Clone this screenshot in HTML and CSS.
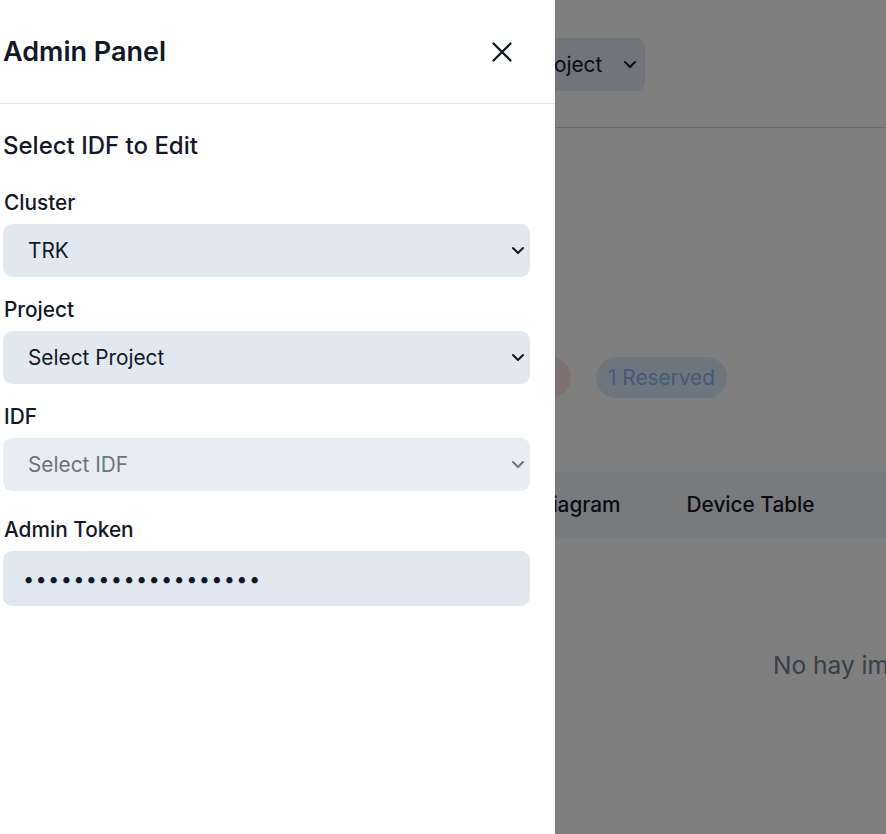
FILE: index.html
```html
<!DOCTYPE html>
<html lang="en">
<head>
<meta charset="utf-8">
<title>Admin Panel</title>
<link rel="stylesheet" href="styles.css">
</head>
<body>
<div class="page">
  <header class="page-header">
    <div class="page-select">Select Project <svg class="chev" width="14" height="9" viewBox="0 0 14 9"><path d="M2 2l5 5 5-5" fill="none" stroke="#111827" stroke-width="2" stroke-linecap="round" stroke-linejoin="round"/></svg></div>
  </header>
  <section class="stats">
    <span class="pill pill-red">3 Occupied</span>
    <span class="pill pill-blue">1 Reserved</span>
  </section>
  <nav class="tabs">
    <span class="tab">Network Diagram</span>
    <span class="tab">Device Table</span>
  </nav>
  <div class="empty">No hay imagen disponible</div>
</div>
<div class="overlay"></div>
<aside class="panel">
  <div class="panel-header">
    <h2 class="panel-title">Admin Panel</h2>
    <button class="close" aria-label="Close">
      <svg width="24" height="24" viewBox="0 0 24 24"><path d="M3.5 3.5l17 17M20.5 3.5l-17 17" fill="none" stroke="#111827" stroke-width="2.3" stroke-linecap="round"/></svg>
    </button>
  </div>
  <div class="panel-body">
    <h3 class="section-title">Select IDF to Edit</h3>
    <div class="field">
      <label class="label">Cluster</label>
      <div class="select-wrap">
        <select class="select"><option>TRK</option></select>
        <svg class="select-chev" width="14" height="9" viewBox="0 0 14 9"><path d="M2 2l5 5 5-5" fill="none" stroke="#111827" stroke-width="2" stroke-linecap="round" stroke-linejoin="round"/></svg>
      </div>
    </div>
    <div class="field">
      <label class="label">Project</label>
      <div class="select-wrap">
        <select class="select"><option>Select Project</option></select>
        <svg class="select-chev" width="14" height="9" viewBox="0 0 14 9"><path d="M2 2l5 5 5-5" fill="none" stroke="#111827" stroke-width="2" stroke-linecap="round" stroke-linejoin="round"/></svg>
      </div>
    </div>
    <div class="field">
      <label class="label">IDF</label>
      <div class="select-wrap">
        <select class="select select-disabled" disabled><option>Select IDF</option></select>
        <svg class="select-chev" width="14" height="9" viewBox="0 0 14 9"><path d="M2 2l5 5 5-5" fill="none" stroke="#6b7280" stroke-width="2" stroke-linecap="round" stroke-linejoin="round"/></svg>
      </div>
    </div>
    <div class="field field-token">
      <label class="label">Admin Token</label>
      <input class="input" type="password" value="abcdefghijklmnopqrs">
    </div>
  </div>
</aside>
</body>
</html>
```
FILE: styles.css
```css
* { box-sizing: border-box; }
html, body { margin: 0; padding: 0; }
body {
  font-family: Inter, "Noto Sans", sans-serif;
  color: #111827;
  background: #ffffff;
  width: 886px;
  height: 834px;
  overflow: hidden;
}
.page { width: 886px; height: 834px; overflow: hidden; }
.page-header {
  height: 128px;
  border-bottom: 1px solid #d1d5db;
  display: flex;
  align-items: flex-start;
  padding: 38px 0 0 442px;
}
.page-select {
  width: 203px;
  height: 53px;
  background: #e2e8f0;
  border-radius: 9px;
  display: flex;
  align-items: center;
  justify-content: space-between;
  padding: 0 8px 0 24px;
  font-size: 20.8px;
}
.stats {
  display: flex;
  gap: 25px;
  padding: 229px 0 0 441px;
}
.pill {
  height: 41px;
  border-radius: 21px;
  display: flex;
  align-items: center;
  padding: 0 12px;
  font-size: 20.8px;
}
.pill-red { background: #fee2e2; color: #ef4444; width: 130px; }
.pill-blue { background: #dbeafe; color: #88b4f4; }
.tabs {
  margin-top: 74px;
  height: 66px;
  background: #f3f4f6;
  display: flex;
  align-items: center;
  padding-left: 447px;
  gap: 66px;
  font-size: 20.8px;
  font-weight: 500;
}
.tab { white-space: nowrap; margin-top: -2px; }
.empty {
  padding: 112px 0 0 773px;
  font-size: 24.5px;
  color: #718096;
  white-space: nowrap;
}
.overlay {
  position: fixed;
  inset: 0;
  background: rgba(0, 0, 0, 0.5);
}
.panel {
  position: fixed;
  top: 0;
  left: 0;
  bottom: 0;
  width: 555px;
  background: #ffffff;
}
.panel-header {
  height: 104px;
  border-bottom: 1px solid #e5e7eb;
  display: flex;
  align-items: center;
  justify-content: space-between;
  padding: 0 41px 0 3px;
}
.panel-title {
  margin: 0;
  font-size: 27px;
  font-weight: 600;
}
.close {
  border: 0;
  background: none;
  padding: 0;
  width: 24px;
  height: 24px;
  cursor: pointer;
  display: block;
}
.close svg { display: block; }
.panel-body {
  padding: 26px 25px 0 3px;
}
.section-title {
  margin: 0 0 27px;
  font-size: 24px;
  font-weight: 500;
  line-height: 32px;
}
.field { margin-bottom: 19px; }
.field + .field-token { padding-top: 6px; }
.label {
  display: block;
  font-size: 20.8px;
  font-weight: 500;
  line-height: 28px;
  margin-bottom: 7px;
  padding-left: 1px;
}
.select-wrap { position: relative; }
.select {
  appearance: none;
  -webkit-appearance: none;
  display: block;
  width: 100%;
  height: 53px;
  border: 0;
  border-radius: 9px;
  background: #e2e8f0;
  font-family: inherit;
  font-size: 20.8px;
  color: #111827;
  padding: 0 40px 0 25px;
  opacity: 1;
}
.select-disabled { background: #e9edf3; color: #6b7280; }
.select-chev {
  position: absolute;
  right: 5px;
  top: 22px;
}
.input {
  display: block;
  width: 100%;
  height: 55px;
  border: 0;
  border-radius: 9px;
  background: #e2e8f0;
  font-family: inherit;
  font-size: 20px;
  letter-spacing: 1.3px;
  padding: 0 20px;
  color: #111827;
}
```
